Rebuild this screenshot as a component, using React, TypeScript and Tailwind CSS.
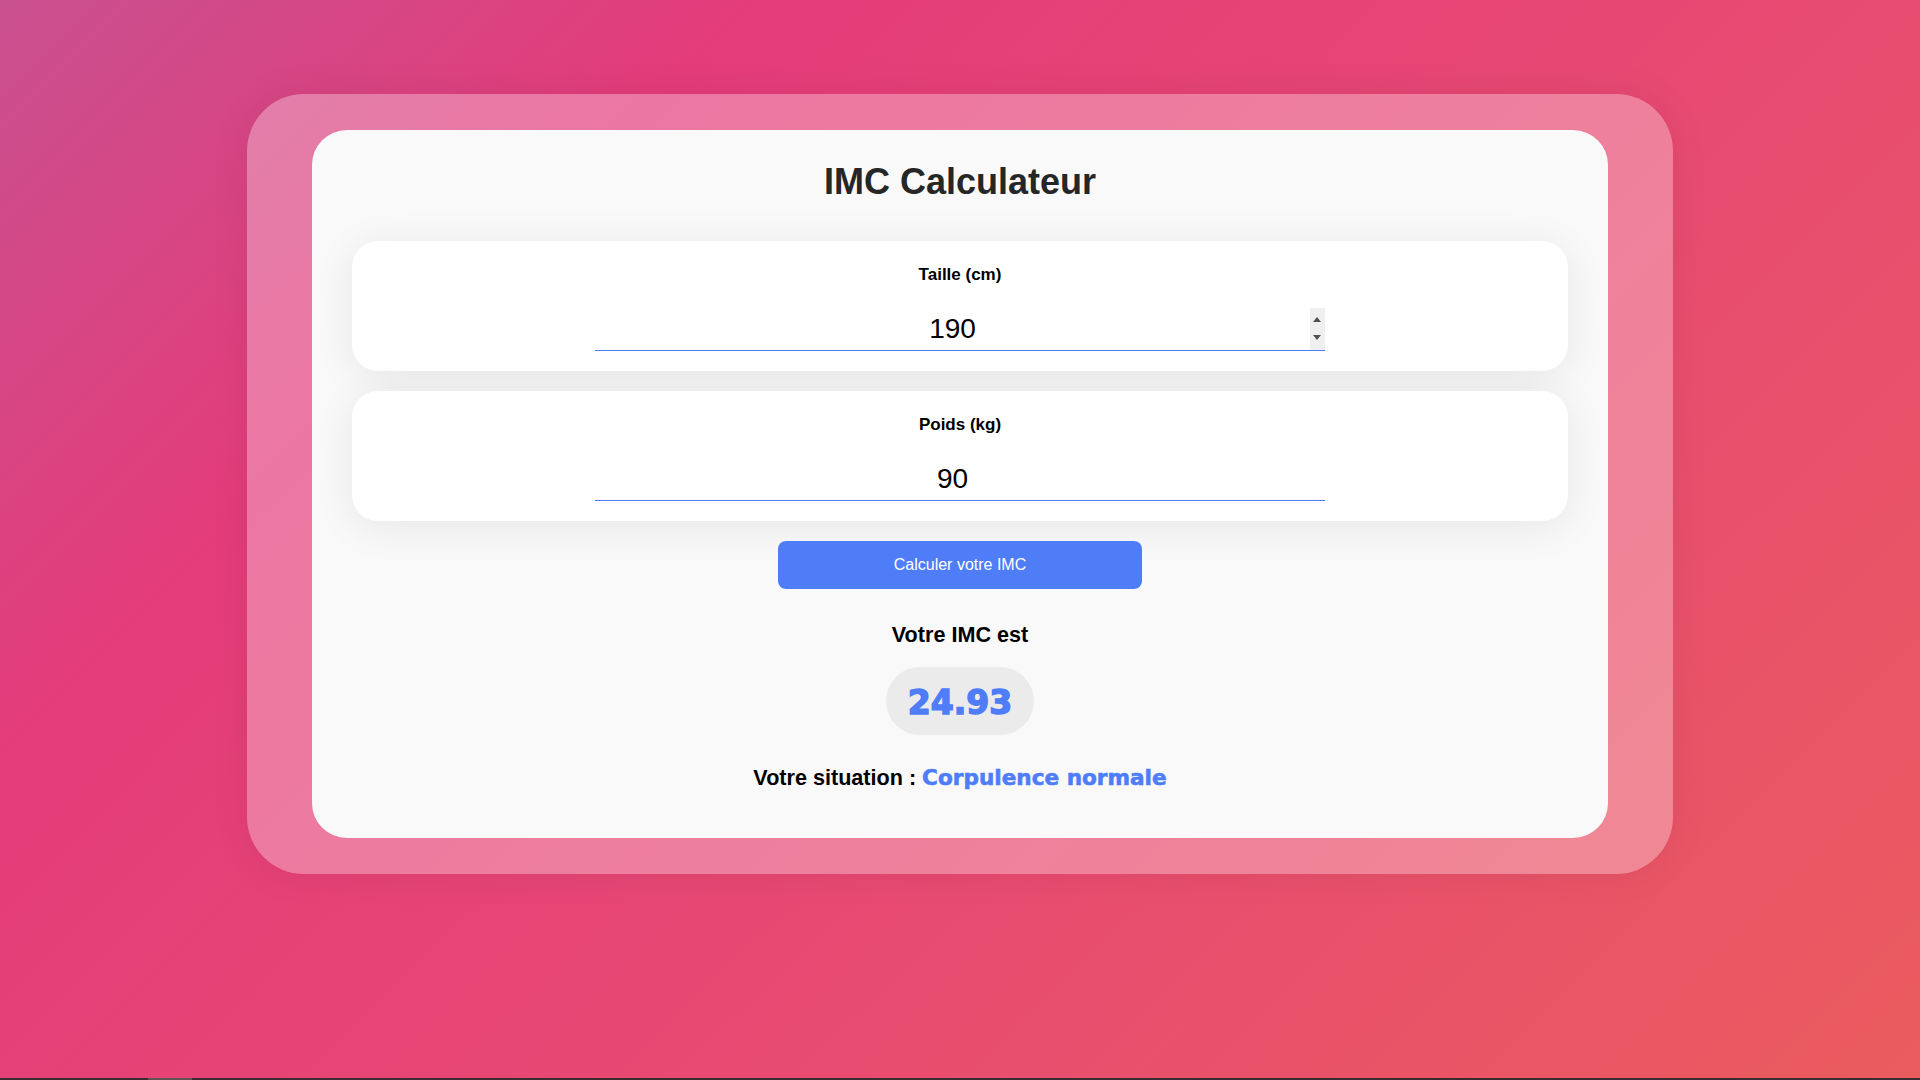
import React from "react";

function Spinner() {
  return (
    <div className="absolute right-0 top-0 bottom-[1px] flex w-[15px] flex-col items-center gap-[13px] bg-[#efefef] pt-[9px]">
      <div className="h-0 w-0 border-x-[4px] border-b-[5px] border-x-transparent border-b-[#505050]" />
      <div className="h-0 w-0 border-x-[4px] border-t-[5px] border-x-transparent border-t-[#505050]" />
    </div>
  );
}

function Field({ label, value, spinner }: { label: string; value: string; spinner?: boolean }) {
  return (
    <div className="flex w-full flex-col items-center rounded-[26px] bg-white pt-6 pb-5 shadow-[0_6px_40px_rgba(0,0,0,0.08)]">
      <label className="text-[17px] leading-[20px] font-bold text-black">{label}</label>
      <div className="relative mt-[23px] w-3/5">
        <input
          type="text"
          inputMode="numeric"
          defaultValue={value}
          className="h-[43px] w-full border-b border-[#4f7df7] bg-white pr-[15px] text-center text-[28px] text-black outline-none"
        />
        {spinner && <Spinner />}
      </div>
    </div>
  );
}

export default function App() {
  return (
    <div className="flex h-screen flex-col font-['Liberation_Sans',Arial,sans-serif]">
      <main className="flex flex-1 justify-center bg-[linear-gradient(135deg,#c9508f_0%,#e43c7a_25%,#e84a72_60%,#ea5c5e_100%)] pt-[94px]">
        <div className="h-fit w-[1426px] rounded-[57px] bg-white/30 px-[65px] py-[36px] shadow-[0_0_40px_rgba(0,0,0,0.07)]">
          <div className="flex flex-col items-center rounded-[35px] bg-[#f9f9f9] px-10 pt-[31px] pb-12">
            <h1 className="text-[36px] leading-[41px] font-bold text-[#262626]">IMC Calculateur</h1>

            <div className="mt-[39px] flex w-full flex-col gap-5">
              <Field label="Taille (cm)" value="190" spinner />
              <Field label="Poids (kg)" value="90" />
            </div>

            <button className="mt-5 h-12 w-[30%] rounded-lg bg-[#4f7df7] text-base text-white">
              Calculer votre IMC
            </button>

            <h2 className="mt-[33px] text-[21.6px] leading-[25px] font-bold text-black">Votre IMC est</h2>

            <div className="mt-5 rounded-full bg-[#ebebeb] px-[22px] pt-[16px] pb-[12px] font-['DejaVu_Sans',sans-serif] text-[33px] leading-[40px] font-bold text-[#4f7df7] [-webkit-text-stroke:1.5px_#4f7df7]">
              24.93
            </div>

            <p className="mt-[30px] text-[21.6px] leading-[25px] font-bold text-black">
              Votre situation :{" "}
              <span className="font-['DejaVu_Sans',sans-serif] text-[#4f7df7] [-webkit-text-stroke:0.6px_#4f7df7]">
                Corpulence normale
              </span>
            </p>
          </div>
        </div>
      </main>
      <div className="flex h-[2px] bg-[#3b2a30]">
        <div className="ml-[148px] w-[44px] bg-[#5e5456]" />
      </div>
    </div>
  );
}
